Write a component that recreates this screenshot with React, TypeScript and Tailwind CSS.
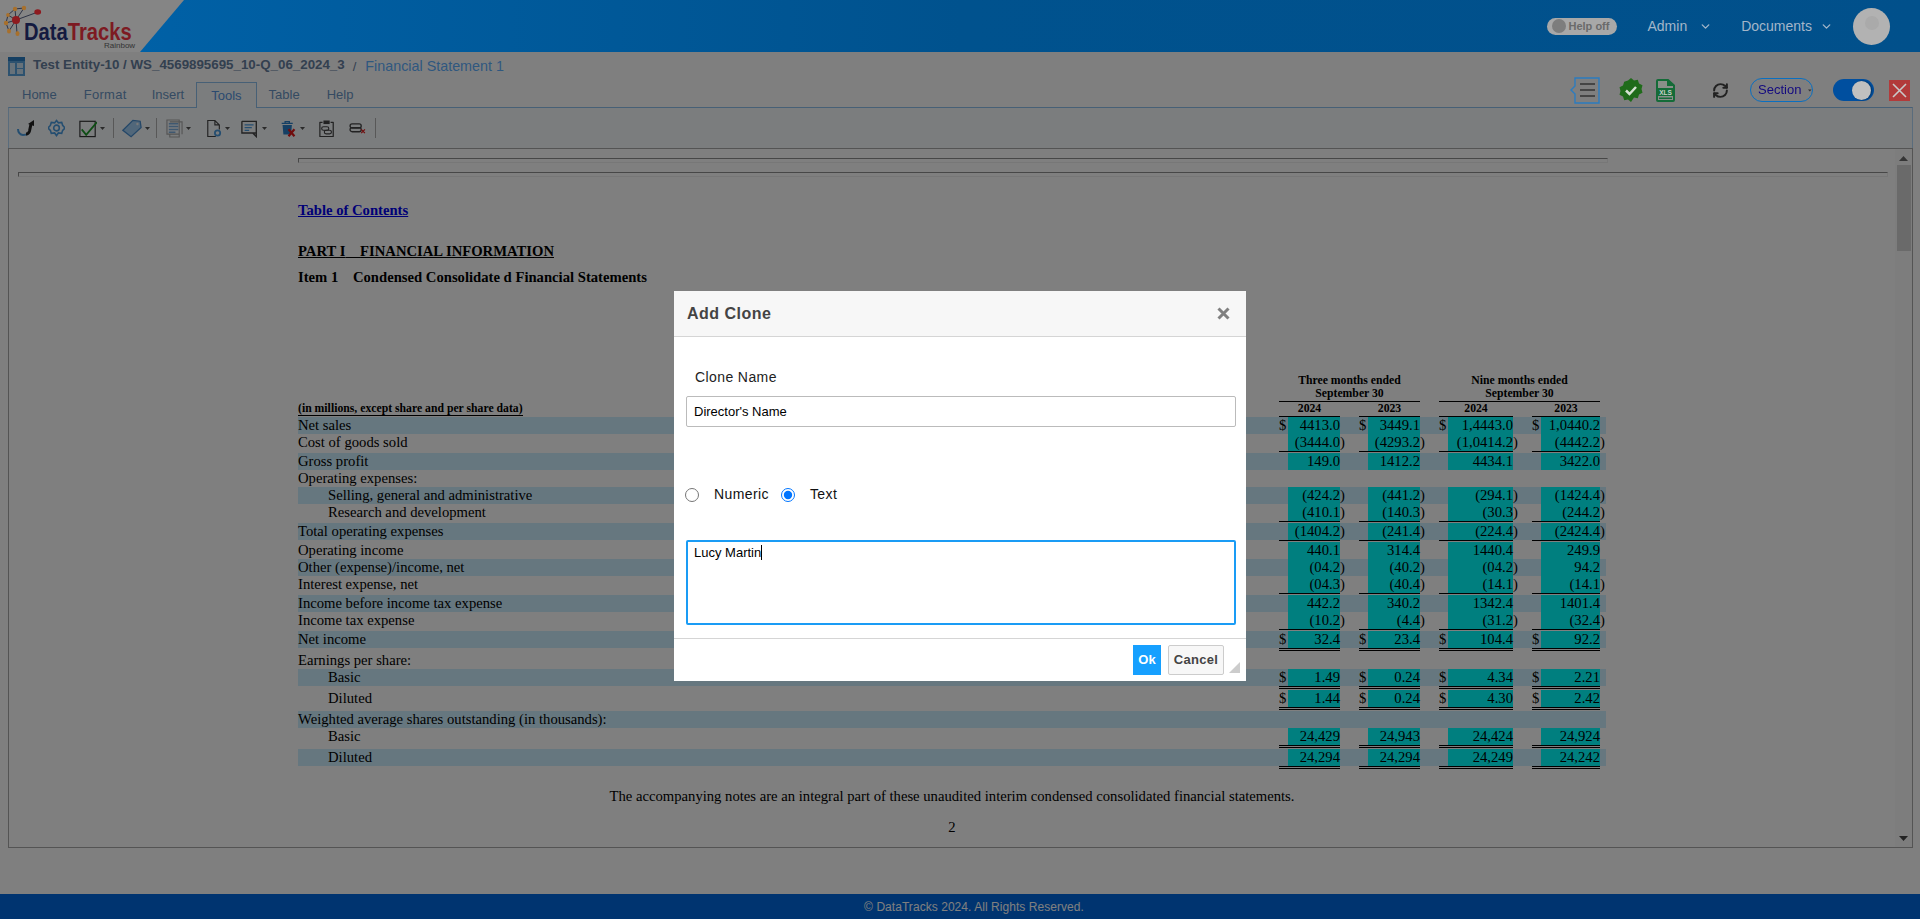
import React from "react";
import { ChevronDown, RefreshCw } from "lucide-react";

const WIDTHS = ["w-[61px]", "w-[61px]", "w-[74px]", "w-[68px]"];

type RowDef = {
  label?: string;
  indent?: boolean;
  band?: boolean;
  dollar?: boolean;
  values?: string[];
  rule?: 1 | 2;
};

const ROWS: RowDef[] = [
  { label: "Net sales", band: true, dollar: true, values: ["4413.0", "3449.1", "1,4443.0", "1,0440.2"] },
  { label: "Cost of goods sold", values: ["(3444.0)", "(4293.2)", "(1,0414.2)", "(4442.2)"], rule: 1 },
  { label: "Gross profit", band: true, values: ["149.0", "1412.2", "4434.1", "3422.0"] },
  { label: "Operating expenses:" },
  { label: "Selling, general and administrative", indent: true, band: true, values: ["(424.2)", "(441.2)", "(294.1)", "(1424.4)"] },
  { label: "Research and development", indent: true, values: ["(410.1)", "(140.3)", "(30.3)", "(244.2)"], rule: 1 },
  { label: "Total operating expenses", band: true, values: ["(1404.2)", "(241.4)", "(224.4)", "(2424.4)"], rule: 1 },
  { label: "Operating income", values: ["440.1", "314.4", "1440.4", "249.9"] },
  { label: "Other (expense)/income, net", band: true, values: ["(04.2)", "(40.2)", "(04.2)", "94.2"] },
  { label: "Interest expense, net", values: ["(04.3)", "(40.4)", "(14.1)", "(14.1)"], rule: 1 },
  { label: "Income before income tax expense", band: true, values: ["442.2", "340.2", "1342.4", "1401.4"] },
  { label: "Income tax expense", values: ["(10.2)", "(4.4)", "(31.2)", "(32.4)"], rule: 1 },
  { label: "Net income", band: true, dollar: true, values: ["32.4", "23.4", "104.4", "92.2"], rule: 2 },
  { label: "Earnings per share:" },
  { label: "Basic", indent: true, band: true, dollar: true, values: ["1.49", "0.24", "4.34", "2.21"], rule: 2 },
  { label: "Diluted", indent: true, dollar: true, values: ["1.44", "0.24", "4.30", "2.42"], rule: 2 },
  { label: "Weighted average shares outstanding (in thousands):", band: true },
  { label: "Basic", indent: true, values: ["24,429", "24,943", "24,424", "24,924"], rule: 2 },
  { label: "Diluted", indent: true, band: true, values: ["24,294", "24,294", "24,249", "24,242"], rule: 2 },
];

function Num({ v }: { v: string }) {
  if (v.endsWith(")")) {
    return (
      <>
        {v.slice(0, -1)}
        <span className="inline-block w-0">)</span>
      </>
    );
  }
  return <>{v}</>;
}

function FinRow({ r }: { r: RowDef }) {
  return (
    <div className="w-[1308px]">
      <div className={`flex h-[17px] gap-[19px] pr-[6px] leading-[17px] ${r.band ? "bg-[#cceeff]" : ""}`}>
        <div className={`flex-1 whitespace-nowrap ${r.indent ? "pl-[30px]" : ""}`}>{r.label}</div>
        {WIDTHS.map((w, i) => (
          <div key={i} className={`flex h-full ${w}`}>
            {r.values && (
              <>
                <span className="w-[9px] shrink-0">{r.dollar ? "$" : ""}</span>
                <span className="flex-1 bg-[#00ffff] text-right whitespace-nowrap">
                  <Num v={r.values[i]} />
                </span>
              </>
            )}
          </div>
        ))}
      </div>
      {r.rule && (
        <div className={`flex gap-[19px] pr-[6px] ${r.rule === 1 ? "h-[2px]" : "h-[4px]"}`}>
          <div className="flex-1" />
          {WIDTHS.map((w, i) => (
            <div key={i} className={`${w} ${r.rule === 1 ? "h-px bg-black" : "h-[3px] border-y border-black"}`} />
          ))}
        </div>
      )}
    </div>
  );
}

function Hr({ className }: { className: string }) {
  return <div className={`h-[5px] border-t border-l border-t-[#8f8f8f] border-l-[#8f8f8f] border-b border-r border-b-[#eeeeee] border-r-[#eeeeee] ${className}`} />;
}

function Caret() {
  return (
    <svg width="5" height="3" viewBox="0 0 7 4" className="ml-[3px] shrink-0">
      <path d="M0 0h7L3.5 4z" fill="#555" />
    </svg>
  );
}

function Sep({ w }: { w: string }) {
  return (
    <div className={`flex h-full items-center ${w}`}>
      <div className="h-[20px] w-px bg-[#b0b0b0]" />
    </div>
  );
}

function Logo() {
  return (
    <svg width="42" height="40" viewBox="0 0 42 40" className="absolute left-0 top-0">
      <g stroke="#2e3345" strokeWidth="1" fill="none">
        <path d="M16 20L38 12M16 20L15 9M16 20L24 8M16 20L6 23M16 20L9 31M16 20L17 33M16 20L8 15M15 9L24 8M8 15L15 9M6 23L8 15M9 31L6 23" />
      </g>
      <circle cx="16" cy="20" r="4" fill="#8e1a1f" />
      <ellipse cx="37.7" cy="12" rx="3.400" ry="2.800" fill="#8e1a1f" />
      <g fill="#a8702c">
        <circle cx="15" cy="9" r="2.200" />
        <circle cx="24" cy="8" r="2.200" />
        <circle cx="6" cy="23" r="2.200" />
        <circle cx="8" cy="15" r="1.900" />
        <ellipse cx="9" cy="31" rx="2" ry="2.600" />
        <ellipse cx="17.5" cy="33.5" rx="2" ry="2.600" />
      </g>
    </svg>
  );
}

function ToolIcons() {
  const blue = "#4a9ce0";
  const dark = "#444";
  return (
    <div className="flex h-full items-center pl-[8px]">
      <div className="flex w-[31px] items-center">
        <svg width="18" height="18" viewBox="0 0 18 18">
          <path d="M1 10c0 3 2 6 5 6 2 0 4-.5 5-1.500" fill="none" stroke={blue} strokeWidth="2" />
          <path d="M9 15c2 0 3-1 3.500-3L14 5" fill="none" stroke="#222" strokeWidth="3" />
          <path d="M11 5l6-4v6z" fill="#222" />
        </svg>
      </div>
      <div className="flex w-[31px] items-center">
        <svg width="17" height="18" viewBox="0 0 18 18">
          <path d="M9 1l2 2.500 3.500-.5 1 3.200L18 9l-2.500 2.500-1 3.200-3.500-.5L9 17l-2-2.800-3.500.5-1-3.200L0 9l2.500-2.700 1-3.200 3.500.5z" fill="none" stroke={blue} strokeWidth="1.700" />
          <circle cx="9" cy="9" r="3" fill="none" stroke={blue} strokeWidth="1.700" />
        </svg>
      </div>
      <div className="flex w-[34px] items-center">
        <svg width="18" height="19" viewBox="0 0 20 20">
          <rect x="1" y="2" width="17" height="17" fill="none" stroke="#333" strokeWidth="1.300" />
          <path d="M3 11l5 6L20 3" fill="none" stroke="#1e9c2a" strokeWidth="2" />
        </svg>
        <Caret />
      </div>
      <Sep w="w-[9px]" />
      <div className="flex w-[34px] items-center">
        <svg width="20" height="19" viewBox="0 0 22 20">
          <path d="M1 12L12 1l8 1 1 7L10 19z" fill="#a3cff4" stroke="#4a8fd0" strokeWidth="1.400" />
          <circle cx="17" cy="5" r="1.300" fill="#f2f2f2" />
        </svg>
        <Caret />
      </div>
      <Sep w="w-[10px]" />
      <div className="flex w-[40px] items-center">
        <svg width="17" height="19" viewBox="0 0 18 20">
          <path d="M4 3h13v13M1 1h13v15H1zM4 16v3h10v-3" fill="none" stroke="#aaa" strokeWidth="1.200" />
          <path d="M3 5h10M3 8h10M3 11h10M3 14h7" stroke="#7fb0e0" strokeWidth="1.600" />
        </svg>
        <Caret />
      </div>
      <div className="flex w-[35px] items-center">
        <svg width="16" height="19" viewBox="0 0 18 20">
          <path d="M11 19H2V1h8l5 5v5M10 1v5h5" fill="none" stroke="#444" strokeWidth="1.300" />
          <circle cx="13" cy="15" r="3" fill="none" stroke={blue} strokeWidth="2" />
        </svg>
        <Caret />
      </div>
      <div className="flex w-[39px] items-center">
        <svg width="18" height="19" viewBox="0 0 20 20">
          <path d="M1 2h16v13H6M1 2v13h12l4 4v-4" fill="none" stroke="#444" strokeWidth="1.500" />
          <path d="M4 6h10M4 9h8M4 12h5" stroke={blue} strokeWidth="1.500" />
        </svg>
        <Caret />
      </div>
      <div className="flex w-[39px] items-center">
        <svg width="17" height="19" viewBox="0 0 20 20">
          <path d="M3 6h11l-1 11H4z" fill="#2a7fc8" />
          <path d="M2 4h13M6 4V2h5v2" fill="none" stroke="#2a7fc8" strokeWidth="1.500" />
          <path d="M10 11l7 8M17 11l-7 8" stroke="#e01818" strokeWidth="2.600" />
        </svg>
        <Caret />
      </div>
      <div className="flex w-[30px] items-center">
        <svg width="16" height="19" viewBox="0 0 18 20">
          <path d="M4 3H1v16h15V3h-3" fill="none" stroke={dark} strokeWidth="1.400" strokeLinejoin="round" />
          <rect x="5" y="1" width="7" height="4" fill={dark} />
          <rect x="3" y="8" width="8" height="4" rx="2" fill="none" stroke={dark} strokeWidth="1.300" />
          <rect x="6" y="12" width="8" height="4" rx="2" fill="none" stroke={dark} strokeWidth="1.300" />
        </svg>
      </div>
      <div className="flex w-[26px] items-center">
        <svg width="17" height="13" viewBox="0 0 18 14">
          <rect x="1" y="2" width="12" height="4.500" rx="2.200" fill="none" stroke={dark} strokeWidth="1.400" />
          <rect x="1" y="6" width="12" height="4.500" rx="2.200" fill="none" stroke={dark} strokeWidth="1.400" />
          <path d="M13 8l4 4M17 8l-4 4" stroke="#e01818" strokeWidth="1.300" />
        </svg>
      </div>
      <Sep w="w-[2px]" />
    </div>
  );
}

export default function App() {
  return (
    <div className="relative flex h-[919px] w-[1920px] flex-col overflow-hidden bg-white font-['Liberation_Sans',sans-serif] text-black">
      {/* top bar */}
      <header className="relative z-[60] flex h-[52px] shrink-0 items-center bg-gradient-to-r from-[#0063aa] via-[#00528e] to-[#01508b]">
        <div className="relative h-full w-[184px] shrink-0 bg-[#858585] [clip-path:polygon(0_0,184px_0,140px_100%,0_100%)]">
          <Logo />
          <div className="absolute left-[24px] top-[22px] origin-left scale-x-[0.84] whitespace-nowrap text-[24px] font-bold leading-[19px] text-[#141a40]">
            Data<span className="text-[#7d1a22]">Tracks</span>
          </div>
          <div className="absolute left-[104px] top-[41px] text-[8px] leading-[10px] text-[#333]">Rainbow</div>
        </div>
        <div className="ml-auto flex items-center pr-[30px]">
          <div className="flex h-[17px] w-[70px] items-center rounded-full bg-[#a8a8a8] pl-[5px]">
            <span className="h-[14px] w-[14px] rounded-full bg-[#7d7d7d]" />
            <span className="ml-[3px] text-[11px] font-bold text-[#6a6a6a]">Help off</span>
          </div>
          <span className="ml-[31px] text-[14px] text-[#a3b6c9]">Admin</span>
          <ChevronDown className="ml-[12px] text-[#a3b6c9]" size={13} strokeWidth={2.500} />
          <span className="ml-[29px] text-[14px] text-[#a3b6c9]">Documents</span>
          <ChevronDown className="ml-[8px] text-[#a3b6c9]" size={13} strokeWidth={2.500} />
          <span className="ml-[20px] flex h-[37px] w-[37px] items-center justify-center rounded-full bg-[#b2b2b2]">
            <span className="-mt-[6px] h-[14px] w-[14px] rounded-full bg-[#aaaaaa]" />
          </span>
        </div>
      </header>

      {/* title + tabs */}
      <div className="flex h-[55px] shrink-0 justify-between">
        <div>
          <div className="flex h-[30px] items-center pl-[8px]">
            <svg width="17" height="19" viewBox="0 0 17 19" className="-mt-[2px]">
              <rect width="17" height="19" fill="#5aa5de" />
              <rect x="0" y="0" width="17" height="4" fill="#2b7fc4" />
              <rect x="2" y="6" width="5" height="11" fill="#cfe4f5" />
              <rect x="9" y="6" width="6" height="5" fill="#cfe4f5" />
              <rect x="9" y="12" width="6" height="5" fill="#cfe4f5" />
            </svg>
            <span className="ml-[8px] -mt-[4px] whitespace-nowrap text-[13.330px] font-bold text-[#66809f]">
              Test Entity-10 / WS_4569895695_10-Q_06_2024_3
            </span>
            <span className="ml-[8px] text-[13px] text-[#66809f]">/</span>
            <span className="ml-[9px] whitespace-nowrap text-[14.330px] text-[#5fb0ff]">Financial Statement 1</span>
          </div>
          <div className="flex h-[25px] pl-[22px] text-[13px] leading-[25px] text-[#6a95c4]">
            <span>Home</span>
            <span className="ml-[27px] tracking-[0.3px]">Format</span>
            <span className="ml-[25px]">Insert</span>
            <span className="relative z-10 ml-[12px] h-[26px] border border-b-0 border-[#8ec0ec] bg-[#f6fafd] px-[14px] text-[#5795e0]">Tools</span>
            <span className="ml-[12px]">Table</span>
            <span className="ml-[27px]">Help</span>
          </div>
        </div>
        <div className="relative z-[60] mt-[24px] flex h-[28px] items-center pr-[10px]">
          <svg width="30" height="27" viewBox="0 0 30 27">
            <path d="M5 1h24v25H5v-9L1 13l4-4z" fill="none" stroke="#2b7cc0" strokeWidth="1.400" />
            <path d="M10 7h15M10 13h15M10 19h15" stroke="#333" strokeWidth="1.500" />
          </svg>
          <svg width="24" height="24" viewBox="0 0 24 24" className="ml-[19px]">
            <path d="M12 0l3 2.500 3.800-.7 1.200 3.700 3.500 1.800-1 3.700 1 3.700-3.500 1.800-1.200 3.700-3.800-.7L12 24l-3-2.500-3.800.7L4 18.500.5 16.700l1-3.700-1-3.700L4 7.500l1.200-3.700L9 2.500z" fill="#1f6b1a" />
            <path d="M7 12.500l3.500 3.500L17 9" fill="none" stroke="#d5e2d2" strokeWidth="2.500" />
          </svg>
          <svg width="21" height="24" viewBox="0 0 21 24" className="ml-[12px]">
            <path d="M2 3a1 1 0 0 1 1-1h10l6 5.500V22a1 1 0 0 1-1 1H3a1 1 0 0 1-1-1z" fill="#8a8f8a" stroke="#146b38" strokeWidth="2" />
            <path d="M12 1v7h8" fill="#146b38" />
            <rect x="1" y="10" width="19" height="8" fill="#146b38" />
            <text x="10.500" y="16.500" textAnchor="middle" fontSize="6.500" fontWeight="700" fill="#c5d2c9" fontFamily="Liberation Sans">XLS</text>
            <rect x="4" y="19.500" width="13" height="1.500" fill="#146b38" />
          </svg>
          <RefreshCw className="ml-[36px] text-[#222]" size={17} strokeWidth={2.800} />
          <div className="ml-[21px] flex h-[24px] w-[63px] items-center rounded-full border border-[#0a6fc0] pl-[7px] text-[13px] text-[#140a80]">
            Section
            <svg width="6" height="3" viewBox="0 0 6 3" className="ml-[7px]"><path d="M0 0h6L3 3z" fill="#333" /></svg>
          </div>
          <div className="ml-[20px] flex h-[22px] w-[41px] items-center justify-end rounded-full bg-[#004f9f] pr-[3px]">
            <span className="h-[19px] w-[19px] rounded-full bg-[#c0c0c0] shadow-[1px_0_2px_rgba(0,0,0,0.4)]" />
          </div>
          <div className="ml-[15px] flex h-[21px] w-[21px] items-center justify-center bg-[#b23a3a]">
            <svg width="15" height="15" viewBox="0 0 15 15"><path d="M1 1l13 13M14 1L1 14" stroke="#c9c9c9" strokeWidth="1.600" /></svg>
          </div>
        </div>
      </div>

      {/* toolbar */}
      <div className="mx-[8px] h-[41px] w-[1905px] shrink-0 border border-b-0 border-[#b5d9f8] border-t-[#8ec0ec] bg-[#f6fafd]">
        <ToolIcons />
      </div>

      {/* document */}
      <div className="mx-[8px] flex h-[700px] w-[1905px] shrink-0 border border-[#a8a8a8] font-['Liberation_Serif',serif] text-[14.670px]">
        <div className="min-w-0 flex-1 overflow-hidden">
          <Hr className="ml-[289px] mt-[9px] w-[1310px]" />
          <Hr className="ml-[9px] mt-[9px] w-[1870px]" />
          <div className="ml-[289px]">
            <a className="mt-[25px] block w-fit font-bold leading-[17px] text-[#0000ee] underline">Table of Contents</a>
            <div className="mt-[24px] w-fit font-bold leading-[17px] underline whitespace-pre">PART I{"    "}FINANCIAL INFORMATION</div>
            <div className="mt-[9px] font-bold leading-[17px] whitespace-pre">Item 1{"    "}Condensed Consolidate d Financial Statements</div>

            <div className="mt-[88px] flex w-[1308px] gap-[19px] pr-[6px] text-[11.730px] font-bold leading-[13px]">
              <div className="flex flex-1 items-end">
                <div className="mb-[1px] border-b border-black leading-[13px]">(in millions, except share and per share data)</div>
              </div>
              <div className="w-[141px] text-center">
                <div className="border-b border-black pb-[1px]">Three months ended<br />September 30</div>
                <div className="flex gap-[19px]">
                  <div className="h-[15px] w-[61px] border-b border-black">2024</div>
                  <div className="h-[15px] w-[61px] border-b border-black">2023</div>
                </div>
              </div>
              <div className="w-[161px] text-center">
                <div className="border-b border-black pb-[1px]">Nine months ended<br />September 30</div>
                <div className="flex gap-[19px]">
                  <div className="h-[15px] w-[74px] border-b border-black">2024</div>
                  <div className="h-[15px] w-[68px] border-b border-black">2023</div>
                </div>
              </div>
            </div>

            {ROWS.map((r, i) => (
              <FinRow key={i} r={r} />
            ))}

            <div className="mt-[18px] w-[1308px] text-center leading-[17px]">
              The accompanying notes are an integral part of these unaudited interim condensed consolidated financial statements.
            </div>
            <div className="mt-[14px] w-[1308px] text-center leading-[17px]">2</div>
          </div>
        </div>
        {/* scrollbar */}
        <div className="flex w-[17px] shrink-0 flex-col items-center bg-[#fafafa]">
          <svg width="9" height="5" viewBox="0 0 9 5" className="mt-[7px]"><path d="M4.500 0L9 5H0z" fill="#6a6a6a" /></svg>
          <div className="mt-[4px] h-[86px] w-[14px] bg-[#d4d4d4]" />
          <svg width="9" height="5" viewBox="0 0 9 5" className="mb-[6px] mt-auto"><path d="M0 0h9L4.500 5z" fill="#444" /></svg>
        </div>
      </div>

      {/* footer */}
      <footer className="mt-auto flex h-[25px] shrink-0 items-center justify-center bg-[#0068e0] pl-[28px] text-[12px] tracking-[0.05px] text-white">
        © DataTracks 2024. All Rights Reserved.
      </footer>

      {/* modal backdrop */}
      <div className="fixed inset-0 z-50 flex justify-center bg-black/50 pt-[291px]">
        <div className="flex h-[390px] w-[572px] flex-col bg-white">
          <div className="flex h-[46px] shrink-0 items-center justify-between border-b border-[#d5d5d5] bg-[#f7f7f7] pl-[13px] pr-[16px]">
            <span className="text-[16px] font-bold tracking-[0.5px] text-[#444]">Add Clone</span>
            <svg width="13" height="13" viewBox="0 0 13 13"><path d="M1.500 1.500l10 10M11.500 1.500l-10 10" stroke="#808080" strokeWidth="3" /></svg>
          </div>
          <div className="flex-1 px-[12px]">
            <div className="ml-[9px] mt-[32px] text-[14px] leading-[17px] tracking-[0.4px] text-[#222]">Clone Name</div>
            <input
              readOnly
              defaultValue="Director's Name"
              className="mt-[10px] block h-[31px] w-[550px] rounded-[2px] border border-[#bbbbbb] px-[7px] text-[13px] text-black outline-none"
            />
            <div className="mt-[60px] flex h-[15px] items-center text-[14px] tracking-[0.4px] text-[#111]">
              <input type="radio" name="kind" className="-ml-[1px] m-0 h-[14px] w-[14px]" />
              <span className="ml-[15px]">Numeric</span>
              <input type="radio" name="kind" defaultChecked className="ml-[12px] m-0 h-[14px] w-[14px]" />
              <span className="ml-[15px]">Text</span>
            </div>
            <div className="mt-[38px] h-[85px] w-[550px] rounded-[2px] border-2 border-[#1a9cf5] px-[6px] pt-[2px] text-[13px] leading-[17px] text-black">
              Lucy Martin
              <span className="inline-block h-[15px] w-px bg-black align-[-3px]" />
            </div>
          </div>
          <div className="relative flex h-[43px] shrink-0 items-center justify-end border-t border-[#d5d5d5] pr-[22px]">
            <button className="h-[30px] w-[28px] bg-[#16a0ff] text-[13px] font-bold text-white">Ok</button>
            <button className="ml-[7px] h-[30px] w-[56px] rounded-[2px] border border-[#cccccc] bg-[#f7f7f7] text-[13px] font-bold tracking-[0.3px] text-[#444]">Cancel</button>
            <svg width="11" height="11" viewBox="0 0 11 11" className="absolute bottom-[8px] right-[6px]"><path d="M11 0v11H0z" fill="#cccccc" /></svg>
          </div>
        </div>
      </div>
    </div>
  );
}
